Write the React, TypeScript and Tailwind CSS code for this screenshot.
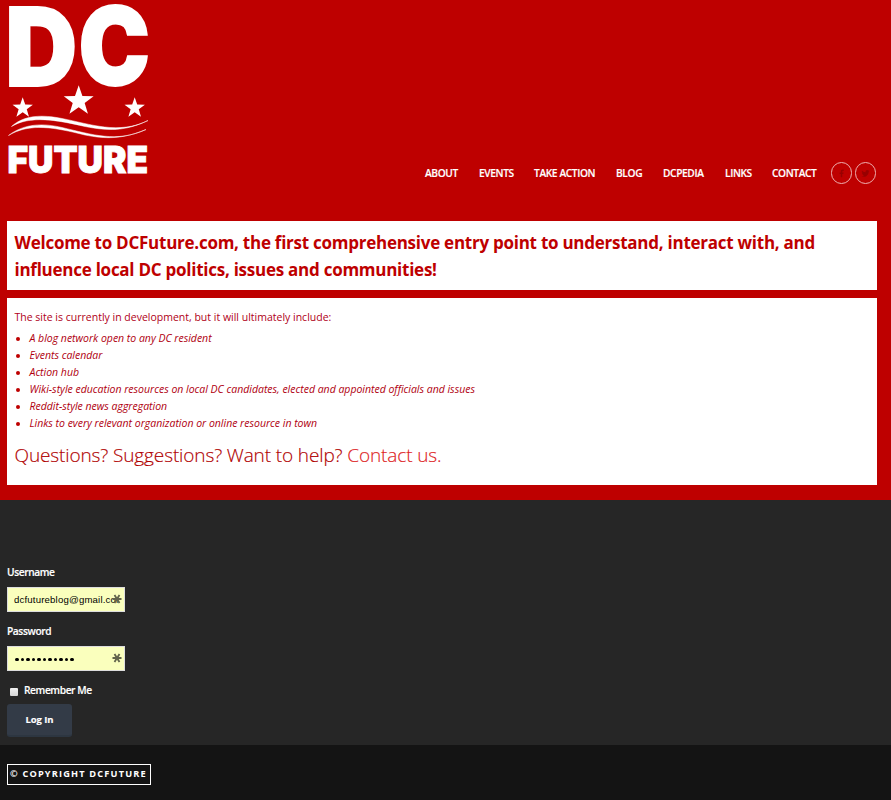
import React from "react";

const navItems = [
  { label: "ABOUT", width: "w-[54px]" },
  { label: "EVENTS", width: "w-[55px]" },
  { label: "TAKE ACTION", width: "w-[82px]" },
  { label: "BLOG", width: "w-[47px]" },
  { label: "DCPEDIA", width: "w-[62px]" },
  { label: "LINKS", width: "w-[47px]" },
  { label: "CONTACT", width: "w-[59px]" },
];

const features = [
  "A blog network open to any DC resident",
  "Events calendar",
  "Action hub",
  "Wiki-style education resources on local DC candidates, elected and appointed officials and issues",
  "Reddit-style news aggregation",
  "Links to every relevant organization or online resource in town",
];

const STAR = "M0,-1 L0.235,-0.324 L0.951,-0.309 L0.380,0.124 L0.588,0.809 L0,0.4 L-0.588,0.809 L-0.380,0.124 L-0.951,-0.309 L-0.235,-0.324 Z";

function Logo() {
  return (
    <svg width="160" height="190" viewBox="0 0 160 190" fill="#fff" className="block shrink-0 overflow-visible">
      <g fontFamily="Inter, sans-serif" fontWeight="900" stroke="#fff" strokeWidth="1.800">
        <text x="5.200" y="85.500" fontSize="109" textLength="72" lengthAdjust="spacingAndGlyphs">D</text>
        <text x="78.500" y="85.300" fontSize="108" textLength="71.500" lengthAdjust="spacingAndGlyphs">C</text>
      </g>
      <path d={STAR} transform="translate(78.700 101) scale(15.700)" />
      <path d={STAR} transform="translate(22.700 108) scale(10.700)" />
      <path d={STAR} transform="translate(134.700 108) scale(10.700)" />
      <path d="M11.500 126.500 C24 115 42 114.500 62 118.500 C90 124 119 135 148 120.500 C125 131.500 108 131 85 126.500 C55 119.500 30 115.500 11.500 126.500Z" stroke="#fff" strokeWidth="0.500" />
      <path d="M8.500 135.500 C24 123.500 43 123 62 127.500 C92 134.500 117 143 146 129.500 C122 139.500 105 139 85 135 C55 127.500 30 122.500 8.500 135.500Z" stroke="#fff" strokeWidth="0.500" />
      <text x="7.500" y="173.300" fontSize="36.800" fontFamily="Inter, sans-serif" fontWeight="900" stroke="#fff" strokeWidth="0.900" textLength="140.500" lengthAdjust="spacingAndGlyphs">FUTURE</text>
    </svg>
  );
}

function SocialCircle({ children }: { children: React.ReactNode }) {
  return (
    <a className="flex h-[22px] w-[21px] items-center justify-center rounded-full border border-[#eeb0b0]">
      <svg width="9" height="9" viewBox="0 0 24 24" fill="#980000">{children}</svg>
    </a>
  );
}

function Asterisk() {
  return (
    <svg className="absolute right-[2px] top-[6px]" width="10" height="10" viewBox="0 0 10 10" stroke="#62644c" strokeWidth="1.800">
      <path d="M0.500 5H9.500M2.500 1L7.500 9M7.500 1L2.500 9" />
    </svg>
  );
}

export default function App() {
  return (
    <div className="flex h-[800px] w-[891px] flex-col overflow-hidden bg-[#be0000] font-['Open_Sans',sans-serif]">
      <header className="flex h-[221px] shrink-0 justify-between">
        <Logo />
        <div className="mt-[162px] flex h-[22px] w-[466px]">
          <nav className="flex items-center text-[10.2px] font-semibold leading-[22px] tracking-[-0.38px] text-white [-webkit-text-stroke:0.15px_#fff]">
            {navItems.map((n) => (
              <a key={n.label} className={`${n.width} whitespace-nowrap`}>{n.label}</a>
            ))}
          </nav>
          <div className="flex gap-[3px]">
            <SocialCircle>
              <path d="M14 22v-9h3l.6-4H14V7c0-1.300.6-2 2-2h2V1.500h-3c-3.500 0-5 2-5 5V9H7v4h3v9z" />
            </SocialCircle>
            <SocialCircle>
              <path d="M23 5c-.8.4-1.700.6-2.500.7.900-.6 1.500-1.400 1.800-2.400-.8.5-1.800.8-2.800 1A4.500 4.500 0 0 0 12 8.500C8 8.300 5 6.500 2.700 3.800c-1.200 2.100-.6 4.700 1.400 6-.7 0-1.400-.2-2-.6 0 2.200 1.500 4 3.600 4.500-.7.200-1.300.2-2 .1.600 1.800 2.200 3.100 4.200 3.200A9 9 0 0 1 1 18.800 13 13 0 0 0 20.800 7.500C21.700 6.900 22.400 6 23 5z" />
            </SocialCircle>
          </div>
        </div>
      </header>

      <main className="mx-[7px] flex h-[279px] w-[870px] shrink-0 flex-col gap-2 text-[#be0000]">
        <section className="h-[69px] shrink-0 bg-white pl-[7.500px] pt-[8px]">
          <h1 className="whitespace-nowrap text-[17px] font-bold leading-[27px] tracking-[-0.255px]">
            Welcome to DCFuture.com, the first comprehensive entry point to understand, interact with, and
            <br />
            influence local DC politics, issues and communities!
          </h1>
        </section>
        <section className="h-[187px] shrink-0 bg-white pl-[7.500px] pt-[11px]">
          <p className="text-[10.500px] leading-[17px] text-[#b00018]">The site is currently in development, but it will ultimately include:</p>
          <ul className="mt-[4px] text-[10.500px] italic leading-[17px] tracking-[-0.010px] text-[#b00010]">
            {features.map((f) => (
              <li key={f} className="flex items-center">
                <span className="ml-[1.500px] mr-[9.500px] h-[4px] w-[4px] rounded-full bg-[#be0000]" />
                <span className="whitespace-nowrap">{f}</span>
              </li>
            ))}
          </ul>
          <p className="mt-[7px] whitespace-nowrap text-[19px] font-light leading-[32px] tracking-[-0.12px] text-[#b00000] [-webkit-text-stroke:0.15px_currentColor]">
            Questions? Suggestions? Want to help? <a className="text-[#dd2222]">Contact us.</a>
          </p>
        </section>
      </main>

      <form className="flex h-[245px] shrink-0 flex-col bg-[#262626] pl-[7px] pt-[64px] text-[10.200px] font-semibold leading-[17px] tracking-[-0.400px] text-white [-webkit-text-stroke:0.15px_currentColor]">
        <label>Username</label>
        <div className="relative mt-[6px] h-[25px] w-[118px] border border-[#dddddd] bg-[#faffbd] pl-[6px] font-['Liberation_Sans',sans-serif] text-[9.600px] font-normal leading-[24px] tracking-[0.180px] text-black [-webkit-text-stroke:0]">
          <span className="block w-[105px] overflow-hidden whitespace-nowrap">dcfutureblog@gmail.com</span>
          <Asterisk />
        </div>
        <label className="mt-[11px]">Password</label>
        <div className="relative mt-[6px] flex h-[25px] w-[118px] items-center gap-[2px] border border-[#dddddd] bg-[#faffbd] pl-[7px] pt-[2px]">
          {Array.from({ length: 11 }, (_, i) => (
            <span key={i} className="h-[3.500px] w-[3.500px] rounded-full bg-black" />
          ))}
          <Asterisk />
        </div>
        <label className="mt-[11px] flex h-[17px] items-center">
          <span className="ml-[3px] mr-[6px] mt-[2px] h-[8px] w-[8px] rounded-[1px] bg-gradient-to-b from-[#f0f0f0] to-[#d5d5d5]" />
          Remember Me
        </label>
        <button type="button" className="mt-[5px] h-[33px] w-[65px] rounded-[3px] border-b-2 border-[#2d3641] bg-[#333b47] text-[9.500px] font-bold tracking-[-0.100px] text-white">
          Log In
        </button>
      </form>

      <footer className="h-[55px] bg-[#141414] pl-[7px] pt-[19px]">
        <div className="h-[21px] w-[144px] whitespace-nowrap border border-white pl-[2px] text-[9.200px] font-bold leading-[18px] tracking-[1.180px] text-white">
          © COPYRIGHT DCFUTURE
        </div>
      </footer>
    </div>
  );
}
